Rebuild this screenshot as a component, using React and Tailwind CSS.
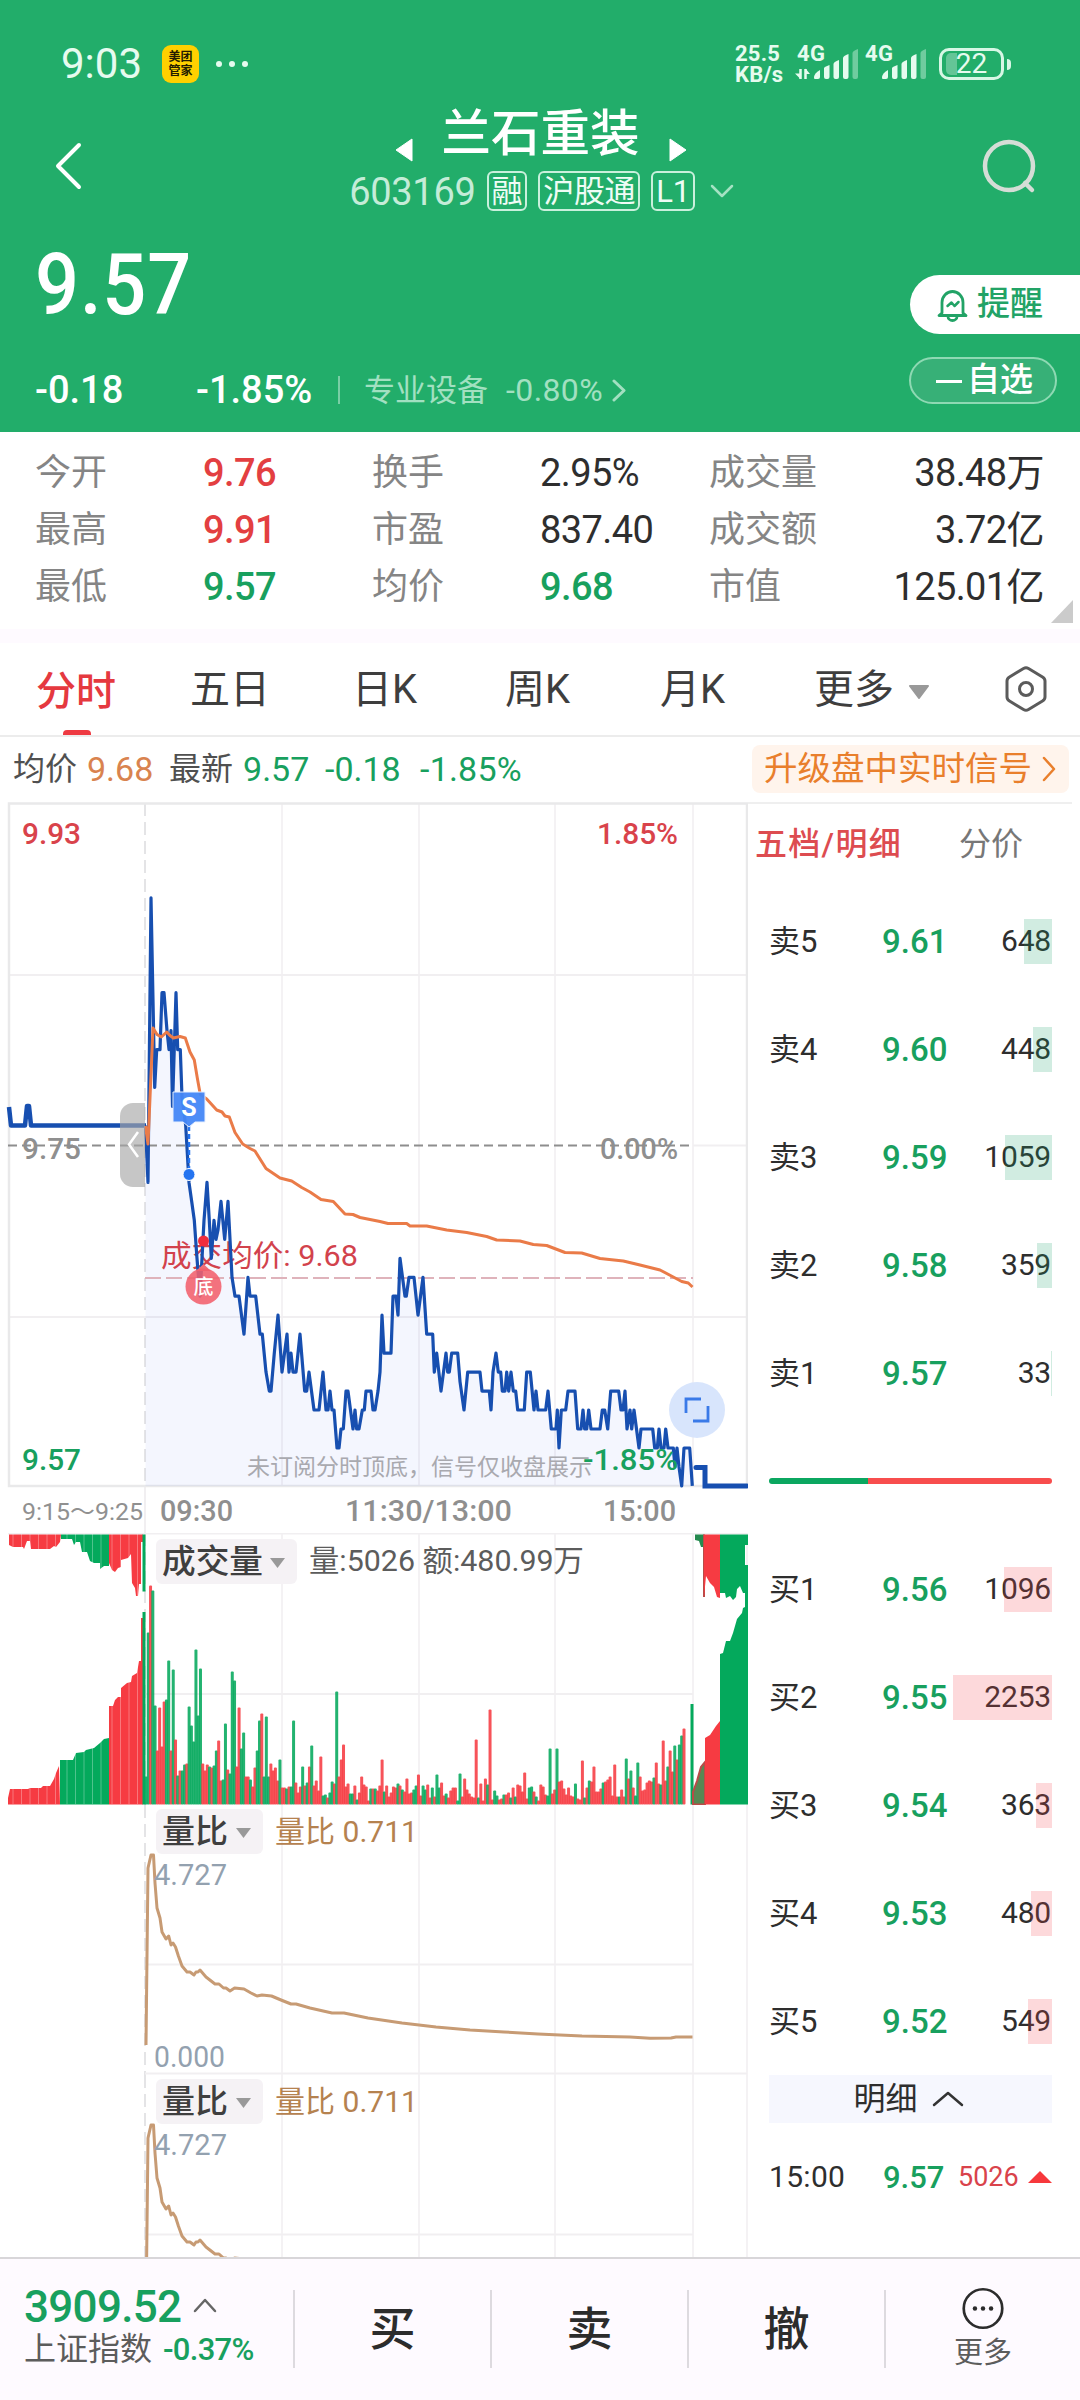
import React from 'react';
import clsx from 'clsx';

const RED = '#f63b42';
const GREEN = '#04a95c';
const BLUE = '#174fb0';

const quoteStats = [
  ['今开', '9.76', 'up', '换手', '2.95%', 'flat', '成交量', '38.48万'],
  ['最高', '9.91', 'up', '市盈', '837.40', 'flat', '成交额', '3.72亿'],
  ['最低', '9.57', 'down', '均价', '9.68', 'down', '市值', '125.01亿'],
];

const toneClass = {
  up: 'text-[#e33f41]',
  down: 'text-[#18a05e]',
  flat: 'text-[#2e2e2e]',
};

const tabs = [
  { label: '分时', width: 'w-[154px]', active: true },
  { label: '五日', width: 'w-[162px]' },
  { label: '日K', width: 'w-[153px]' },
  { label: '周K', width: 'w-[155px]' },
  { label: '月K', width: 'w-[154px]' },
];

const asks = [
  ['卖5', '9.61', 648, 28],
  ['卖4', '9.60', 448, 19],
  ['卖3', '9.59', 1059, 47],
  ['卖2', '9.58', 359, 15],
  ['卖1', '9.57', 33, 1],
];

const bids = [
  ['买1', '9.56', 1096, 48],
  ['买2', '9.55', 2253, 99],
  ['买3', '9.54', 363, 16],
  ['买4', '9.53', 480, 21],
  ['买5', '9.52', 549, 24],
];

// x, ticks below the 9.93 limit (one tick = 0.01)
const priceTicks = [
  145.5, 17, 148, 20, 151, 5, 154.7, 15, 156.7, 13, 160, 13, 162, 10, 164, 10, 167, 12, 169, 13, 171, 12, 172.5, 16,
  176, 10, 177.7, 13, 180.3, 13, 182, 15.5, 185.7, 17, 189, 20, 191.7, 21, 194.3, 22, 197, 24, 200, 26, 202, 24,
  204, 22, 207, 20, 209.3, 22, 211.3, 24, 214, 22, 216, 23, 218, 22.5, 221, 21, 224.7, 23, 228, 21, 230, 23, 232, 25,
  235, 26, 239, 26, 244, 28, 248, 25, 250, 26, 255.7, 26, 260, 28, 262.3, 28, 266, 30, 269.3, 31, 271, 31, 274.3, 29,
  278, 27, 282, 30, 287, 28, 289, 30, 291, 29, 293, 30, 296, 30, 300, 28, 304.7, 31, 306.7, 31, 309, 30, 314, 32,
  319, 32, 323, 30, 326, 32, 328, 32, 330, 31, 332, 32, 334, 32, 337, 34, 339, 34, 341, 33, 343.3, 33, 346, 31,
  348, 31, 353, 33, 355, 32, 356.7, 33, 359, 33, 362.3, 32, 364.3, 32, 366, 31, 371, 31, 373, 32, 375, 32, 378, 31,
  380, 30, 382, 27, 384, 29, 391, 29, 393, 26, 396, 26, 398, 27, 400, 24, 405, 26, 406.3, 26, 409, 25, 414, 25,
  418, 27, 423, 25, 426.7, 28, 432.7, 28, 434.3, 30, 436.7, 29, 441, 31, 446, 29, 447.7, 30, 449.3, 30, 451.7, 29,
  457.7, 29, 460, 30.5, 464, 32, 467.7, 30, 480, 30, 482, 31, 489.3, 31, 491, 32, 493, 30, 496, 29, 498.3, 30,
  500.7, 30, 502.3, 31, 505, 31, 506.7, 30, 508.7, 31, 511, 30, 513.3, 31, 515.7, 31, 517.7, 32, 524.3, 32, 526.7, 30,
  530.3, 30, 534, 32, 536, 31, 538, 32, 545.7, 32, 548, 31, 551.3, 33, 556, 33, 557.3, 32, 559, 34, 561.3, 32,
  565.7, 32, 568, 31, 575, 31, 577.7, 33, 581, 33, 583, 32, 584.7, 33, 586.7, 33, 588.7, 32, 591, 33, 600, 33,
  602.3, 32, 604.7, 32, 607.7, 33, 610.7, 31, 618.7, 31, 621, 32, 623, 32, 625, 31, 627, 33, 630, 32, 631.7, 33,
  634, 32, 639, 34, 641, 33, 652.7, 33, 654.7, 34, 657.3, 34, 659, 33, 661, 34, 664, 34, 665.7, 33, 668, 34,
  673.3, 34, 675, 35, 677, 34, 679, 35, 681.7, 36, 684, 34, 689.7, 34, 692.3, 36,
];

const pricePoints = priceTicks
  .map((v, i) => (i % 2 ? (803 + v * 18.97).toFixed(1) : v))
  .join(' ');

const averagePoints =
  '145.5 1126 148 1144 153 1028 157 1034.5 161.3 1037 166.7 1032 170 1035.5 173.3 1038 180 1036.5 185.3 1038 190 1052 194.3 1060 197.3 1078 200.3 1094.5 206.7 1099 216.7 1110 222 1112 225 1116 229.3 1117 235 1132.5 242.7 1144 250 1148.5 255 1151 266 1168.5 280 1178 291.7 1181 301.7 1187.5 310 1192 321 1199.5 333.3 1201.5 345 1214 353 1214.5 360 1217.5 380 1221.5 388 1223.5 406.7 1223.5 410 1226 426.7 1226 446.7 1230 466.7 1232.5 486.7 1236.5 496.7 1240 520 1241 533.3 1244.5 546.7 1245.5 565 1252.5 581.7 1253 600 1258.5 623.3 1261 640 1265 660 1270 673.3 1277 681.7 1281.5 688.3 1283 692.5 1287';

// one entry per minute, negative = sell side
const morningVolume = [
  -28, -172, 219, -214, -99, 54, 97, 58, 103, -105, -144, 54, -135, 65, -29, 34, -34, -40, 41, -98, -79, -63, -155, -89,
  -136, 41, 34, 40, -38, 37, -39, -54, 64, 24, -25, -81, 35, -31, -133, -124, 38, 97, -56, -72, 28, 28, -25, 18, 37, -54,
  -84, 91, -28, -88, -28, 41, 34, 37, 24, -45, 17, 17, -16, 18, -18, -84, 22, 12, 18, -38, 19, -22, 38, -59, 19, 24, 14,
  48, -9, -10, 7, -12, -23, 21, -113, 28, 45, 60, 18, 21, -11, -11, 19, -5, 12, 28, 20, 18, 4, -16, 16, -16, 14, 19, 45,
  -13, 19, 8, 12, 18, 17, -21,
];
const afternoonVolume = [
  19, -15, 13, 26, 11, 12, -15, -19, 30, 9, -19, -15, 20, 7, -17, 8, -30, -17, 22, 9, -11, 7, 14, 17, 17, -4, -31, 8, 26,
  15, 11, 8, 7, 65, -7, 21, 4, 26, -20, 95, 5, -14, -9, 5, 6, -10, 10, 12, -7, 17, -8, 20, 19, 13, 32, 6, -17, -18, 13,
  -8, 4, 20, 18, 10, -9, -56, 11, 15, -56, 23, 24, 16, 10, 17, 9, 8, -21, 6, 5, 44, -7, 17, -24, 23, 38, 13, 13, 16, -22,
  23, 25, 28, 9, 40, 8, -8, 15, 8, -46, 26, -34, 17, -9, -42, 28, 14, 15, 22, 24, 23, -27, 42, 21, -20, 64, 24, -38, 54,
  33, -59, 45, -60, -69, 76,
];

const ratioPoints =
  '146 2045 148 1868 151 1855 153.5 1855 155 1883 157 1908 160 1918 162 1932 166 1939 168.7 1936 171 1945 173 1943 175.5 1947 178.4 1956 182 1966 187 1972 190 1972 194 1975 196 1972 198 1972 200 1970 206 1977 215 1984 219 1984 223.5 1988 226 1988 230 1991 234.6 1988 244 1989 251 1993 257 1996 262 1995 271.5 1996 281 2000 291 2004 296 2004 310 2008 332 2013 344 2013 368 2018 402 2023 436 2027 470 2030 504 2032 538 2034 582 2036 630 2037 650 2038.3 671 2038 676 2037 692.5 2037';

function Chevron({ d, w, h, color, stroke = 3 }) {
  return (
    <svg width={w} height={h} viewBox={`0 0 ${w} ${h}`} className="shrink-0" aria-hidden="true">
      <path d={d} fill="none" stroke={color} strokeWidth={stroke} strokeLinecap="round" strokeLinejoin="round" />
    </svg>
  );
}

function Label({ x, y, size = 30, len, fill = '#8f8f8f', weight = 500, children }) {
  return (
    <text
      x={x}
      y={y}
      fontSize={size}
      textLength={len}
      lengthAdjust="spacingAndGlyphs"
      fill={fill}
      fontWeight={weight}
    >
      {children}
    </text>
  );
}

function Signal({ arrows }) {
  return (
    <svg width="64" height="36" viewBox="0 0 64 36" className="overflow-visible" aria-hidden="true" fill="#e6fbef">
      <text x="1" y="15" fontSize="22" fontWeight="700" textLength="28">4G</text>
      {arrows && (
        <g>
          <path d="M4.500 23v10M9.500 33V23" stroke="#e6fbef" strokeWidth="2.500" />
          <path d="M-1 27.500h5.500v5.500zM14 28H9.500v-5.500z" />
        </g>
      )}
      <path d="M18 32q0-5 6-8v7q0 2-2 2h-3q-1 0-1-1z" />
      <path d="M28 22q0-1 5.500-3v12q0 2-2 2h-1.500q-2 0-2-2z" />
      <path d="M37.500 18q0-2 5.500-4v17q0 2-2 2h-1.500q-2 0-2-2z" />
      <path d="M47 12q0-2 5.500-4v23q0 2-2 2h-1.500q-2 0-2-2z" />
      <path d="M56.500 7q0-2 5.500-4v28q0 2-2 2h-1.500q-2 0-2-2z" opacity="0.4" />
    </svg>
  );
}

function StatusBar() {
  return (
    <div className="flex h-[100px] items-center pt-7 pr-[69px] pl-[61px]">
      <span className="w-[101px] text-[42px] leading-none text-[#e6fbef]">9:03</span>
      <span className="flex h-[38px] w-[37px] flex-col items-center justify-center rounded-[9px] bg-[#ffd000] text-[12px] leading-[14px] font-bold text-[#231c00]">
        <span>美团</span>
        <span>管家</span>
      </span>
      <span className="ml-[17px] flex gap-[7px]">
        <i className="h-1.5 w-1.5 rounded-full bg-[#e6fbef]" />
        <i className="h-1.5 w-1.5 rounded-full bg-[#e6fbef]" />
        <i className="h-1.5 w-1.5 rounded-full bg-[#e6fbef]" />
      </span>
      <div className="ml-auto flex items-center">
        <div className="w-[61px] text-[22px] leading-[21px] font-bold tracking-[0.2px] text-[#e6fbef]">
          <div>25.5</div>
          <div>KB/s</div>
        </div>
        <Signal arrows />
        <div className="ml-1">
          <Signal />
        </div>
        <div className="ml-[11px] flex items-center gap-[3px]">
          <span className="relative flex h-8 w-[65px] items-center justify-center rounded-[10px] border-[3px] border-[#d7f7e5] text-[28px] leading-none text-[#e6fbef]">
            <i className="absolute top-[2px] left-[4px] h-[22px] w-[11px] rounded-l-[5px] bg-white/30" />
            <span className="relative">22</span>
          </span>
          <i className="h-[11px] w-1 rounded-r bg-[#d7f7e5]" />
        </div>
      </div>
    </div>
  );
}

function Tag({ children }) {
  return (
    <span className="flex h-10 items-center rounded-md border-2 border-[#c9f0dc] px-[3px] text-[31px] leading-none tracking-[-0.3px] text-[#effcf5]">
      {children}
    </span>
  );
}

function Header() {
  return (
    <header className="h-[432px] bg-[#22ad6a] text-white">
      <StatusBar />
      <div className="flex h-[132px] items-start justify-between pr-[43px] pl-[55px]">
        <div className="mt-[42px]">
          <Chevron d="M24 3L3 24L24 45" w={27} h={48} color="#fff" stroke={4} />
        </div>
        <div className="ml-[20px] flex flex-col items-center pt-1.5">
          <div className="mr-[2px] flex h-14 items-center gap-[29px]">
            <svg width="18" height="24" viewBox="0 0 18 24" className="mt-8" aria-hidden="true">
              <path d="M17 1v22L1 12z" fill="#fff" stroke="#fff" strokeLinejoin="round" />
            </svg>
            <h1 className="pt-[2px] text-[49.500px] leading-none font-medium">兰石重装</h1>
            <svg width="18" height="24" viewBox="0 0 18 24" className="mt-8" aria-hidden="true">
              <path d="M1 1v22l16-11z" fill="#fff" stroke="#fff" strokeLinejoin="round" />
            </svg>
          </div>
          <div className="mt-[9px] flex h-10 items-center gap-[11px]">
            <span className="pt-[2px] text-[38px] leading-none tracking-[-0.3px] text-[#c5ecd8]">603169</span>
            <Tag>融</Tag>
            <Tag>沪股通</Tag>
            <Tag>L1</Tag>
            <span className="ml-1">
              <Chevron d="M2 2L12 12L22 2" w={24} h={14} color="#a5e2c3" stroke={2.5} />
            </span>
          </div>
        </div>
        <svg width="56" height="56" viewBox="0 0 56 56" className="mt-[38px]" fill="none" stroke="#d5ddd6" strokeWidth="4.500" strokeLinecap="round" aria-hidden="true">
          <circle cx="28" cy="28" r="24" />
          <path d="M44 45l7 7" />
        </svg>
      </div>

      <div className="flex h-[200px] justify-between">
        <div className="pl-[35px]">
          <div className="w-fit origin-left scale-x-90 pt-[8px] text-[86px] leading-[90px] font-medium tracking-[1px]">9.57</div>
          <div className="mt-[40px] flex h-[40px] items-center text-[38px] leading-none">
            <span className="w-[161px] font-medium">-0.18</span>
            <span className="w-[142px] font-medium">-1.85%</span>
            <i className="h-7 w-0.5 bg-white/40" />
            <span className="ml-6 text-[31px] text-[#a2e0c1]">专业设备</span>
            <span className="ml-[18px] w-[98px] text-[32px] tracking-[0.4px] text-[#a2e0c1]">-0.80%</span>
            <span className="ml-[8px]">
              <Chevron d="M2 2L12 11.500L2 21" w={15} h={23} color="#a2e0c1" />
            </span>
          </div>
        </div>
        <div className="flex w-[170px] flex-col pt-[43px]">
          <button className="flex h-[59px] items-center rounded-l-full bg-white pl-[27px] text-[33px] leading-none text-[#22a366]">
            <svg width="31" height="34" viewBox="0 0 31 34" fill="none" stroke="#22a366" strokeWidth="2.800" strokeLinejoin="round" strokeLinecap="round" aria-hidden="true">
              <path d="M5 25V14.500a10.500 11 0 0 1 21 0V25l3 2.500H2zM11 28.500a4.500 4 0 0 0 9 0" />
              <path d="M10.500 18l4-3.500 3 3.500 4-4" strokeWidth="2.500" />
            </svg>
            <span className="pb-[2px] pl-[9px] font-medium">提醒</span>
          </button>
          <button className="mt-[23px] -ml-px flex h-[47px] w-[148px] items-center rounded-full border-2 border-[#8ed9b3] bg-[#37b077] pb-[3px] pl-[25px] text-[33px] leading-none font-medium">
            <i className="mt-[4px] mr-[5px] h-[3px] w-[26px] bg-white" />
            自选
          </button>
        </div>
      </div>
    </header>
  );
}

function Stats() {
  return (
    <section className="relative h-[197px] bg-white pt-[13px] pr-9 pl-[35px]">
      {quoteStats.map((row) => (
        <div
          key={row[0]}
          className="grid h-[56.700px] grid-cols-[168px_169px_168px_169px_1fr_auto] items-center text-[36px] leading-none text-[#858585]"
        >
          <span>{row[0]}</span>
          <span className={clsx('text-[38px] font-medium tracking-[-0.6px]', toneClass[row[2]])}>{row[1]}</span>
          <span>{row[3]}</span>
          <span className={clsx('text-[38px] tracking-[-0.6px]', toneClass[row[5]], row[5] === 'down' && 'font-medium')}>
            {row[4]}
          </span>
          <span>{row[6]}</span>
          <span className="text-[38px] tracking-[-0.6px] text-[#2e2e2e]">{row[7]}</span>
        </div>
      ))}
      <svg width="22" height="23" viewBox="0 0 22 23" className="absolute right-[7px] bottom-[6px]" aria-hidden="true">
        <path d="M22 0v23H0z" fill="#cbcbcb" />
      </svg>
    </section>
  );
}

function Tabs() {
  return (
    <nav className="flex h-[94px] items-stretch border-b-2 border-[#ececec] bg-white pl-[36px] text-[40px] leading-none text-[#3e3e3e]">
      {tabs.map((tab) => (
        <div key={tab.label} className={clsx('flex flex-col', tab.width, tab.active && 'font-medium text-[#e5393f]')}>
          <span className={clsx('flex flex-1 items-center', tab.active ? 'pt-[5px]' : 'pt-[2px]')}>{tab.label}</span>
          {tab.active && <i className="-mt-[5px] ml-[27px] h-[5px] w-7 rounded-t bg-[#ee3a42]" />}
        </div>
      ))}
      <span className="flex w-[190px] items-center pt-[2px]">
        更多
        <svg width="22" height="14" viewBox="0 0 22 14" className="mt-1 ml-[14px]" aria-hidden="true">
          <path d="M2 1h18l-9 12z" fill="#999" stroke="#999" strokeLinejoin="round" strokeWidth="2" />
        </svg>
      </span>
      <svg width="44" height="48" viewBox="0 0 44 48" className="self-center" fill="none" stroke="#5b5b5b" strokeWidth="3" strokeLinejoin="round" aria-hidden="true">
        <path d="M19.500 3.500Q22 2 24.500 3.500L38.500 12Q41 13.500 41 16v16q0 2.500-2.500 4L24.500 44.500Q22 46 19.500 44.500L5.500 36Q3 34.500 3 32V16q0-2.500 2.500-4z" />
        <circle cx="22" cy="24" r="6.500" />
      </svg>
    </nav>
  );
}

function SummaryRow() {
  return (
    <div className="flex h-[65px] items-center bg-white pr-[11px] pb-[2px] pl-[13px] text-[32px] leading-none text-[#505050]">
      <span>均价</span>
      <span className="ml-[10px] w-[73px] text-[34px] text-[#d9834f]">9.68</span>
      <span className="ml-[9px]">最新</span>
      <span className="ml-[10px] w-[82px] text-[34px] text-[#18a05e]">9.57</span>
      <span className="w-[95px] text-[34px] text-[#18a05e]">-0.18</span>
      <span className="text-[34px] tracking-[0.2px] text-[#18a05e]">-1.85%</span>
      <span className="ml-auto flex h-12 w-[317px] items-center justify-between rounded-lg bg-[#fff4ec] pr-[13px] pl-3 text-[33.500px] text-[#e97f2c]">
        升级盘中实时信号
        <Chevron d="M2 2L12 13L2 24" w={14} h={26} color="#e97f2c" stroke={2.5} />
      </span>
    </div>
  );
}

function VerticalGrid({ top, bottom }) {
  return (
    <g stroke="#f4f2f4" strokeWidth="2">
      <path d={`M145 ${top}V${bottom}`} strokeDasharray="13 6" stroke="#e4e4e6" />
      <path d={`M282 ${top}V${bottom}M419 ${top}V${bottom}M555 ${top}V${bottom}M693 ${top}V${bottom}M747 ${top}V${bottom}`} />
    </g>
  );
}

function PriceChart() {
  return (
    <svg width="748" height="731" viewBox="0 802 748 731" className="block overflow-visible" role="img" aria-label="分时">
      <VerticalGrid top={803} bottom={1486} />
      <path d="M8 975H747M8 1317H747M693 1145.500H747M145 1486V1533" stroke="#f1eff1" strokeWidth="2" />
      <path d="M9 803.500H747V1486H9Z" fill="none" stroke="#e9e9ea" strokeWidth="2.500" />
      <polygon points={`${pricePoints} 692.3 1486 145.5 1486`} fill="#4a6df0" fillOpacity="0.06" />

      <Label x={161} y={1266} len={197} fill="#d2424c" weight={400}>成交均价: 9.68</Label>
      <path d="M145 1278H693" stroke="#dfb3bb" strokeWidth="2" strokeDasharray="16 5" />
      <path d="M8 1145.500H693" stroke="#8e8e8e" strokeWidth="2" strokeDasharray="9 5" />

      <Label x={247} y={1475} size={23} len={345} fill="#a9a9af" weight={400}>未订阅分时顶底，信号仅收盘展示</Label>

      <polyline points={pricePoints} fill="none" stroke={BLUE} strokeWidth="3.200" strokeLinejoin="round" />
      <path d="M9 1107L11 1125.500H25L27 1106H29L31 1125.500H146" fill="none" stroke={BLUE} strokeWidth="4.500" strokeLinejoin="round" />
      <path d="M696 1467.500H705V1486H747" fill="none" stroke={BLUE} strokeWidth="5" strokeLinecap="round" />
      <polyline points={averagePoints} fill="none" stroke="#ea7b48" strokeWidth="3" strokeLinejoin="round" />

      <Label x={22} y={844} len={59} fill="#d9434b">9.93</Label>
      <Label x={597} y={844} len={81} fill="#d9434b">1.85%</Label>
      <Label x={22} y={1159} len={59}>9.75</Label>
      <Label x={600} y={1159} len={78}>0.00%</Label>
      <Label x={22} y={1470} len={59} fill="#18a05e">9.57</Label>
      <Label x={583} y={1470} len={95} fill="#18a05e">-1.85%</Label>
      <Label x={22} y={1520} size={24} len={121} weight={400} fill="#909090">9:15～9:25</Label>
      <Label x={160} y={1521} len={73}>09:30</Label>
      <Label x={345} y={1521} len={167}>11:30/13:00</Label>
      <Label x={603} y={1521} len={73}>15:00</Label>

      {/* fold handle for the pre-open auction */}
      <path d="M145 1103H133a13 13 0 0 0-13 13v58a13 13 0 0 0 13 13h12z" fill="#a7a7a7" fillOpacity="0.65" />
      <path d="M138 1132L129 1144.500L138 1157" fill="none" stroke="#fff" strokeWidth="2.500" />

      <path d="M189 1126V1170" stroke="#2474f0" strokeWidth="2.500" strokeDasharray="5 3" />
      <path d="M173 1092H205V1122H195L189 1127L183 1122H173Z" fill="#4587f7" fillOpacity="0.95" stroke="#e8f0ff" />
      <text x="189" y="1116" fontSize="25" fontWeight="700" fill="#fff" textAnchor="middle">S</text>
      <circle cx="189" cy="1174.500" r="6" fill="#2474f0" stroke="#fff" strokeWidth="1" />
      <circle cx="203.500" cy="1241" r="5.500" fill="#f02c3d" />
      <path d="M203.500 1264L211 1271H196Z" fill="#ef6f78" />
      <circle cx="203.500" cy="1286.500" r="18" fill="#f2606c" fillOpacity="0.88" />
      <text x="203.500" y="1294" fontSize="20" fill="#fff" textAnchor="middle" fontWeight="500">底</text>

      <circle cx="697" cy="1410" r="28" fill="#d5e3fc" fillOpacity="0.93" />
      <path d="M686 1413V1399H701M708 1406V1421H693" fill="none" stroke="#3a7ae8" strokeWidth="2.800" />
    </svg>
  );
}

function Bars({ data, from, to }) {
  const step = (to - from) / (data.length - 1);
  return data.map((v, i) => (
    <rect
      key={i}
      x={from + i * step - 1.5}
      y={1804.5 - Math.abs(v)}
      width="3"
      height={Math.abs(v)}
      rx="1"
      fill={v < 0 ? GREEN : RED}
      fillOpacity="0.88"
    />
  ));
}

function IndicatorHead({ name, y, width, textLen, children }) {
  return (
    <g>
      <rect x="156" y={y} width={width} height="45" rx="6" fill="#f5f2f5" />
      <Label x={162} y={y + 34} size={33} len={textLen} fill="#3f3f3f">{name}</Label>
      <path d={`M${156 + width - 27} ${y + 19}h15l-7.500 10z`} fill="#999" />
      {children}
    </g>
  );
}

function VolumeChart() {
  return (
    <svg width="748" height="272" viewBox="0 1533 748 272" className="block" role="img" aria-label="成交量">
      <VerticalGrid top={1533} bottom={1805} />
      <path d="M8 1533.500H747M145 1694H693" stroke="#f1eff1" strokeWidth="2" />

      {/* opening auction */}
      <path d="M9 1534.500V1545L13 1547H23L24 1549L27 1541H30L31 1549H50L54 1546L56 1547L60 1542L61 1534.500Z" fill={RED} />
      <path d="M61 1534.500V1539H72L74 1545L76 1542H80L82 1552H87L90 1561L94 1563H100V1569L104 1566H109V1534.500Z" fill={GREEN} />
      <path d="M109 1534.500V1563L112 1570L115 1572L118 1568L121 1567V1560L128 1558L131 1554L132 1583L135 1588L136 1596H138L139 1584H141V1542H143V1534.500Z" fill={RED} />
      <path d="M8 1804.500V1798L10 1789H28L30 1788H41L43 1786H50L54 1779L56 1773L59 1766L60 1804.500Z" fill={RED} />
      <path d="M60 1804.500V1760H73L76 1753L84 1752L86 1750L94 1748L100 1743L104 1739L109 1738V1804.500Z" fill={GREEN} />
      <path d="M109 1804.500V1706H113L115 1700L118 1697H121V1688L127 1683L131 1682L132 1676L137 1673L139 1661H141V1618H143V1804.500Z" fill={RED} />
      <path
        d="M13 1534V1804M21.500 1534V1804M30 1534V1804M38.500 1534V1804M47 1534V1804M55.500 1534V1804M67 1534V1804M75.500 1534V1804M84 1534V1804M92.500 1534V1804M101 1534V1804M112 1534V1804M120.500 1534V1804M129 1534V1804M137.500 1534V1804"
        stroke="#fff"
        strokeOpacity="0.3"
      />
      <path d="M144 1534.500V1591.500M144 1612V1804.500" stroke={GREEN} strokeWidth="3" />

      <Bars data={morningVolume} from={146} to={398} />
      <Bars data={afternoonVolume} from={400} to={684} />
      <rect x="690.500" y="1704" width="3" height="100.500" fill={GREEN} />

      {/* closing auction */}
      <path d="M695 1534.500V1540L699 1541L701 1547H704V1534.500Z" fill="#258a4f" />
      <path d="M704 1534.500V1597M693 1804.500V1792L697 1781L701 1767L705 1762V1804.500Z" stroke="#b94b47" fill="#588753" strokeWidth="2" />
      <path d="M704 1534.500V1597L706 1576L710 1583L714 1587L717 1597L720 1598V1534.500Z" fill={RED} />
      <path d="M720 1534.500V1593H725L726 1598L730 1596L733 1600L736 1597L737 1589L740 1586L743 1593H745V1545H748V1534.500Z" fill={GREEN} />
      <path d="M705 1804.500V1738L710 1735L716 1726L720 1721V1804.500Z" fill={RED} />
      <path d="M720 1804.500V1654L723 1653L726 1641H730L733 1633L737 1619L742 1613L743 1608L745 1607V1565H748V1804.500Z" fill={GREEN} />

      <IndicatorHead name="成交量" y={1539} width={141} textLen={101}>
        <Label x={309} y={1571} size={30} len={275} fill="#5c5c5c" weight={400}>量:5026 额:480.99万</Label>
      </IndicatorHead>
    </svg>
  );
}

function RatioChart({ clipped }) {
  const height = clipped ? 182 : 270;
  return (
    <svg width="748" height={height} viewBox={`0 1805 748 ${height}`} className="block" role="img" aria-label="量比">
      <VerticalGrid top={1805} bottom={2075} />
      <path d="M145 1964.500H693M145 2073.500H747" stroke="#f1eff1" strokeWidth="2" />
      <polyline points={ratioPoints} fill="none" stroke="#c79b74" strokeWidth="3" strokeLinejoin="round" />
      <IndicatorHead name="量比" y={1809} width={107} textLen={66}>
        <Label x={275} y={1842} size={30} len={143} fill="#b5824f" weight={400}>量比 0.711</Label>
      </IndicatorHead>
      <Label x={154} y={1885} size={30} len={73} fill="#93a1af" weight={400}>4.727</Label>
      {!clipped && <Label x={154} y={2067} size={30} len={71} fill="#93a1af" weight={400}>0.000</Label>}
    </svg>
  );
}

function DepthRow({ row, side }) {
  const [label, price, qty, bar] = row;
  return (
    <div className="grid h-[108px] grid-cols-[113px_1fr_auto] items-center text-[31px] leading-none text-[#2e2e2e]">
      <span>{label}</span>
      <span className="text-[33px] font-medium text-[#18a05e]">{price}</span>
      <span className="relative flex h-[45px] items-center text-[30px]">
        <i
          className={clsx('absolute top-0 right-0 h-full', side === 'ask' ? 'bg-[#17a068]/20' : 'bg-[#f5414b]/20')}
          style={{ width: bar }}
        />
        <span className="pr-px tracking-[-0.2px]">{qty}</span>
      </span>
    </div>
  );
}

function OrderBook() {
  return (
    <aside className="w-[332px] bg-white">
      <div className="mr-2 flex h-[85px] items-center border-t-2 border-[#efefef] pb-[3px] pl-[7px] text-[32px] leading-none">
        <span className="w-[204px] font-medium tracking-[1.300px] text-[#dd4c50]">五档/明细</span>
        <span className="text-[#777]">分价</span>
      </div>
      <div className="pr-7 pl-[21px]">
        {asks.map((row) => <DepthRow key={row[0]} row={row} side="ask" />)}
        <div className="flex h-[108px] items-center">
          <i className="h-1.5 w-[99px] rounded-l bg-[#0ba760]" />
          <i className="h-1.5 flex-1 rounded-r bg-[#f84d4d]" />
        </div>
        {bids.map((row) => <DepthRow key={row[0]} row={row} side="bid" />)}
        <div className="flex h-12 items-center justify-center gap-[14px] bg-[#f6f7fe] pr-1 text-[32px] leading-none text-[#2e2e2e]">
          明细
          <Chevron d="M2 14L16 2L30 14" w={32} h={16} color="#333" stroke={2.5} />
        </div>
        <div className="flex h-[108px] items-center text-[30px] leading-none text-[#2e2e2e]">
          <span className="w-[114px] tracking-[0.3px]">15:00</span>
          <span className="w-[75px] text-[31px] font-medium text-[#18a05e]">9.57</span>
          <span className="text-[27px] text-[#d9434b]">5026</span>
          <svg width="24" height="12" viewBox="0 0 24 12" className="ml-auto" aria-hidden="true">
            <path d="M12 0l12 12H0z" fill="#f7383c" />
          </svg>
        </div>
      </div>
    </aside>
  );
}

function BottomBar() {
  return (
    <footer className="flex h-[143px] items-start border-t-2 border-[#d8d6d9] bg-[#fefaff]">
      <div className="w-[293px] pt-[25px] pl-6">
        <div className="flex h-[46px] items-center gap-3 text-[44px] leading-none font-medium tracking-[-0.700px] text-[#18a05e]">
          3909.52
          <span className="-mt-1">
            <Chevron d="M2 13L12 2L22 13" w={24} h={15} color="#666" stroke={2.5} />
          </span>
        </div>
        <div className="-mt-[1px] flex h-10 items-center text-[32px] leading-none text-[#5c5c5c]">
          上证指数
          <span className="ml-[11px] text-[31px] font-medium tracking-[-0.700px] text-[#18a05e]">-0.37%</span>
        </div>
      </div>
      {['买', '卖', '撤'].map((action) => (
        <button
          key={action}
          className="mt-[31px] flex h-[78px] w-[197px] items-center justify-center border-l-2 border-[#dddadf] text-[46px] leading-none font-medium text-[#2c2c2c]"
        >
          {action}
        </button>
      ))}
      <div className="mt-[31px] flex h-[78px] flex-1 flex-col items-center border-l-2 border-[#dddadf] text-[29px] leading-none text-[#5c5c5c]">
        <svg width="48" height="48" viewBox="0 0 48 48" className="-mt-[3px]" aria-hidden="true">
          <circle cx="24" cy="24" r="21.500" fill="none" stroke="#2c2c2c" strokeWidth="3" />
          <circle cx="15" cy="24" r="2.500" fill="#2c2c2c" />
          <circle cx="24" cy="24" r="2.500" fill="#2c2c2c" />
          <circle cx="33" cy="24" r="2.500" fill="#2c2c2c" />
        </svg>
        <span className="mt-[9px]">更多</span>
      </div>
    </footer>
  );
}

export default function App() {
  return (
    <div className="h-[2400px] w-[1080px] overflow-hidden bg-[#fefaff] font-['Roboto','Noto_Sans_CJK_SC',sans-serif]">
      <Header />
      <Stats />
      <div className="h-[14px]" />
      <Tabs />
      <SummaryRow />
      <main className="flex h-[1455px] overflow-hidden bg-white">
        <div className="w-[748px]">
          <PriceChart />
          <VolumeChart />
          <RatioChart />
          <RatioChart clipped />
        </div>
        <OrderBook />
      </main>
      <BottomBar />
    </div>
  );
}
